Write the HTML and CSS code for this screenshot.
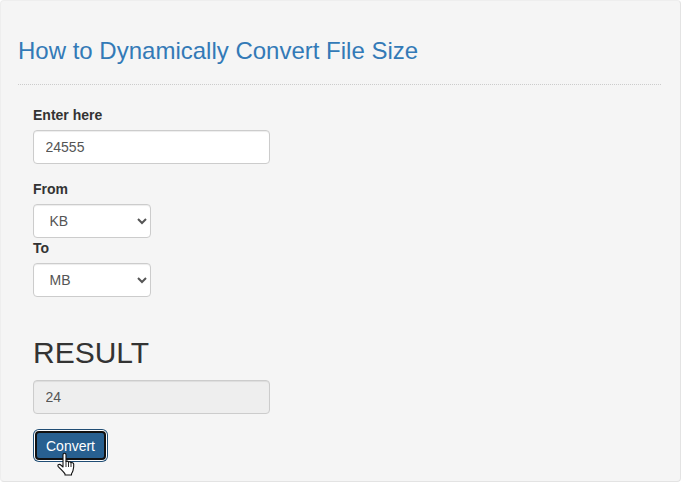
FILE: index.html
```html
<!DOCTYPE html>
<html lang="en">
<head>
    <meta charset="UTF-8">
    <meta name="viewport" content="width=device-width, initial-scale=1.0">
    <title>How to Dynamically Convert File Size</title>
    <link rel="stylesheet" href="styles.css">
</head>
<body>
<div class="well">
    <h3 class="page-title">How to Dynamically Convert File Size</h3>
    <div class="converter">
        <div class="form-group">
            <label for="size">Enter here</label>
            <input class="form-control" id="size" type="text" value="24555">
        </div>
        <label for="from">From</label>
        <select class="form-control unit" id="from">
            <option>KB</option>
            <option>MB</option>
            <option>GB</option>
        </select>
        <label for="to">To</label>
        <select class="form-control unit" id="to">
            <option>MB</option>
            <option>KB</option>
            <option>GB</option>
        </select>
        <h2 class="result-title">RESULT</h2>
        <input class="form-control" type="text" value="24" disabled>
        <div class="button-wrap">
            <button class="btn-convert" type="button">Convert</button>
            <svg class="hand-cursor" width="19" height="24" viewBox="0 0 19 24">
                <path d="M6 3c0-1.100.7-1.800 1.500-1.800S9 1.900 9 3v6.500c1-.5 2-.3 2.500.5 1-.5 2-.2 2.500.7 1-.4 2.500.2 2.700 1.500.2 2-.2 4.500-.7 6.500-.3 1.200-.8 2-1.500 3v1.300H8v-1.200C6 19.500 3.500 17 1.300 14.600c-.6-.7-.5-1.600.2-2 .8-.5 1.700-.2 2.300.4L6 15z" fill="#fff" stroke="#111" stroke-width="1.100" stroke-linejoin="round"/>
                <path d="M9 9.500V15M11.500 10v5M14 10.700V15" fill="none" stroke="#111" stroke-width=".9"/>
            </svg>
        </div>
    </div>
</div>
</body>
</html>
```

FILE: styles.css
```css
* {
    box-sizing: border-box;
}
body {
    font-family: "Liberation Sans", Arial, sans-serif;
    font-size: 14px;
    line-height: 20px;
    color: #333;
    background-color: #fff;
    margin: 0;
}
.well {
    height: 482px;
    padding: 0 19px 0 17px;
    background-color: #f5f5f5;
    border: 1px solid #e3e3e3;
    border-top-color: #eee;
    border-left-color: #eee;
    border-radius: 4px;
}
.page-title {
    margin: 0;
    padding: 36px 0 20px;
    font-size: 24px;
    font-weight: 500;
    line-height: 27px;
    color: #337ab7;
    border-bottom: 1px dotted #ccc;
}
.converter {
    padding: 20px 15px 0;
}
label {
    display: block;
    margin-bottom: 5px;
    font-weight: bold;
}
.form-group {
    margin-bottom: 15px;
}
.form-control {
    display: block;
    width: 237px;
    height: 34px;
    padding: 6px 12px 6px 11.5px;
    font-family: inherit;
    font-size: 14px;
    line-height: 20px;
    color: #555;
    background-color: #fff;
    border: 1px solid #ccc;
    border-radius: 4px;
    box-shadow: inset 0 1px 1px rgba(0,0,0,0.075);
}
.form-control:disabled {
    background-color: #eee;
    opacity: 1;
}
.unit {
    width: 118px;
}
.result-title {
    margin: 39px 0 11px;
    font-size: 30px;
    font-weight: 500;
    line-height: 33px;
    color: #333;
}
.button-wrap {
    position: relative;
    margin-top: 17px;
    margin-left: 2px;
}
.btn-convert {
    display: block;
    width: 71px;
    height: 29px;
    padding: 0 0 0 0;
    font-family: inherit;
    font-size: 14px;
    color: #fff;
    background-color: #286090;
    border: 2px solid #111;
    border-radius: 4px;
    box-shadow: 0 0 0 1px #fff, 0 0 0 2px #204d74;
}
.hand-cursor {
    position: absolute;
    left: 22px;
    top: 21px;
}
```
